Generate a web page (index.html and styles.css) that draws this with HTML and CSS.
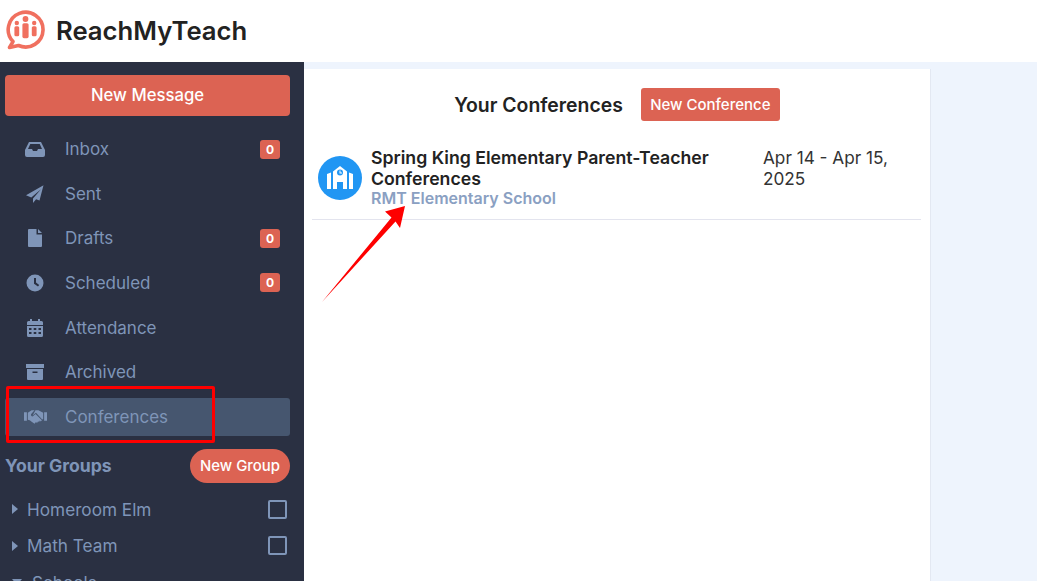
FILE: index.html
```html
<!DOCTYPE html>
<html lang="en">
<head>
<meta charset="utf-8">
<title>ReachMyTeach</title>
<link rel="stylesheet" href="styles.css">
</head>
<body>
<div class="app">
  <header class="topbar">
    <svg class="logo" viewBox="0 0 40 40" aria-hidden="true">
      <path class="logo-ring" d="M3.500 37.500 L7 31.600 A17.400 17.400 0 1 1 12.500 35.500 Z"/>
      <circle class="logo-fill" cx="19.500" cy="9" r="2.900"/>
      <circle class="logo-fill" cx="10.800" cy="13" r="2.200"/>
      <circle class="logo-fill" cx="28.200" cy="13" r="2.200"/>
      <rect class="logo-fill" x="16.400" y="13.200" width="6.200" height="15" rx="1.600"/>
      <rect class="logo-fill" x="8.400" y="16.200" width="4.800" height="10" rx="1.500"/>
      <rect class="logo-fill" x="25.800" y="16.200" width="4.800" height="10" rx="1.500"/>
    </svg>
    <span class="brand">ReachMyTeach</span>
  </header>
  <div class="body">
    <aside class="sidebar">
      <button class="new-message">New Message</button>
      <nav class="nav">
        <a class="nav-item"><span class="nav-icon"><svg viewBox="0 0 20 16" width="20" height="16"><path d="M4 1h12l4 8v5a2 2 0 0 1-2 2H2a2 2 0 0 1-2-2V9zm1.300 2L3 8H7l1 2h4l1-2h4l-2.300-5z" fill-rule="evenodd"/></svg></span><span class="nav-label">Inbox</span><span class="badge">0</span></a>
        <a class="nav-item"><span class="nav-icon"><svg viewBox="0 0 18 18" width="18" height="18"><path d="M17.500.2 0 10.300l5.300 2.200L15 4.200 7 13.400V18l3.100-3.800 3.400 1.400z"/></svg></span><span class="nav-label">Sent</span></a>
        <a class="nav-item"><span class="nav-icon"><svg viewBox="0 0 14 18" width="14" height="18"><path d="M0 1a1 1 0 0 1 1-1h7.500v5.500H14V17a1 1 0 0 1-1 1H1a1 1 0 0 1-1-1zM10 0l4 4h-4z"/></svg></span><span class="nav-label">Drafts</span><span class="badge">0</span></a>
        <a class="nav-item"><span class="nav-icon"><svg viewBox="0 0 18 18" width="18" height="18"><path fill-rule="evenodd" d="M9 .5a8.500 8.500 0 1 0 0 17 8.500 8.500 0 0 0 0-17zM8 4h2v4.600l3.200 2.300-1.200 1.600L8 9.700z"/></svg></span><span class="nav-label">Scheduled</span><span class="badge">0</span></a>
        <a class="nav-item"><span class="nav-icon"><svg viewBox="0 0 16 18" width="16" height="18"><path fill-rule="evenodd" d="M3 0h2v2h6V0h2v2h1.500A1.500 1.500 0 0 1 16 3.500V6H0V3.500A1.500 1.500 0 0 1 1.500 2H3zM0 7h16v9.500a1.500 1.500 0 0 1-1.500 1.500h-13A1.500 1.500 0 0 1 0 16.500zm2 2v2h2.500V9zm4.700 0v2h2.600V9zm4.800 0v2H14V9zM2 13v2h2.500v-2zm4.700 0v2h2.600v-2zm4.800 0v2H14v-2z"/></svg></span><span class="nav-label">Attendance</span></a>
        <a class="nav-item"><span class="nav-icon"><svg viewBox="0 0 18 16" width="18" height="16"><path fill-rule="evenodd" d="M0 0h18v4H0zM1 5h16v10a1 1 0 0 1-1 1H2a1 1 0 0 1-1-1zm5.500 2.500v1.500h5V7.500z"/></svg></span><span class="nav-label">Archived</span></a>
        <a class="nav-item active"><span class="nav-icon"><svg viewBox="0 0 24 15" width="23" height="15"><path d="M0 3h3v9H0zM21 3h3v9h-3zM4 3.500 8 1h3L7.500 5a1.500 1.500 0 0 0 2.200 2l2.300-2 6.700 6.300-1.200 1.400-1-.9-.6 1.300-1.300-.3-.8 1.200-1.600-.4L11 15l-3-2-2-1.500-2-.5zM12 1h3l5 2.500V10l-1 .5L12.500 3.500 9 6.500z"/></svg></span><span class="nav-label">Conferences</span></a>
      </nav>
      <div class="groups-head">
        <span class="groups-title">Your Groups</span>
        <button class="new-group">New Group</button>
      </div>
      <ul class="tree">
        <li class="tree-row"><span class="caret"></span><span class="tree-label">Homeroom Elm</span><span class="check"></span></li>
        <li class="tree-row"><span class="caret"></span><span class="tree-label">Math Team</span><span class="check"></span></li>
        <li class="tree-row"><span class="caret-down"></span><span class="tree-label">Schools</span></li>
      </ul>
    </aside>
    <main class="main">
      <section class="panel">
        <div class="panel-head">
          <h1 class="panel-title">Your Conferences</h1>
          <button class="new-conf">New Conference</button>
        </div>
        <div class="conf-row">
          <svg class="school" viewBox="0 0 44 44" aria-hidden="true">
            <circle cx="22" cy="22" r="22" fill="#2196f3"/>
            <path fill="#fff" fill-rule="evenodd" d="M22 10l7 5.500V33h-4v-7h-6v7h-4V15.500zm0 3.500a3 3 0 1 0 0 6 3 3 0 0 0 0-6z"/>
            <path fill="#fff" d="M9 18l4-1.500V33H9zM35 18l-4-1.500V33h4z"/>
            <path fill="#fff" d="M21.500 14.500h1v2h1.500v1h-2.500z"/>
          </svg>
          <div class="conf-info">
            <div class="conf-name">Spring King Elementary Parent-Teacher Conferences</div>
            <div class="conf-school">RMT Elementary School</div>
          </div>
          <div class="conf-date">Apr 14 - Apr 15, 2025</div>
        </div>
      </section>
    </main>
  </div>
  <div class="callout-box"></div>
  <svg class="callout-arrow" viewBox="0 0 100 110" aria-hidden="true"><path fill="#fe0000" d="M0 105 L69.500 20.500 L63 14.500 L83 9 L78 31 L73.500 24.500 Z"/></svg>
</div>
</body>
</html>
```
FILE: styles.css
```css
* { box-sizing: border-box; }
html, body { margin: 0; padding: 0; height: 100%; overflow: hidden; }
body { font-family: Inter, "Liberation Sans", sans-serif; color: #222; background: #eef4fd; }
button { font-family: inherit; border: 0; color: #fff; background: #dc6353; }
.app { position: relative; width: 1037px; height: 581px; overflow: hidden; display: flex; flex-direction: column; }

.topbar { flex: none; height: 62px; background: #fff; display: flex; align-items: center; padding: 0 0 2px 6px; gap: 10px; }
.logo { width: 40px; height: 40px; flex: none; }
.logo-ring { fill: none; stroke: #f0705f; stroke-width: 3.600px; stroke-linejoin: round; }
.logo-fill { fill: #f0705f; }
.brand { font-size: 25.700px; font-weight: 600; color: #222; }

.body { flex: 1; display: flex; min-height: 0; }
.sidebar { flex: none; width: 304px; background: #2a3042; padding: 13px 14px 0 5px; overflow: hidden; }
.new-message { display: block; width: 100%; height: 41px; border-radius: 4px; font-size: 16.700px; font-weight: 500; padding: 0 0 2px; }
.nav { display: flex; flex-direction: column; gap: 6.670px; margin-top: 14px; }
.nav-item { height: 38px; display: flex; align-items: center; border-radius: 3px; padding: 0 10px 0 18px; color: #7f95b8; font-size: 17px; }
.nav-item.active { background: #46566f; }
.nav-icon { width: 24px; display: flex; justify-content: center; margin-right: 18px; flex: none; }
.nav-icon svg { fill: #7f95b8; display: block; }
.nav-label { flex: 1; }
.badge { width: 20px; height: 19px; border-radius: 3px; background: #dc6353; color: #fff; font-size: 12px; font-weight: 700; display: flex; align-items: center; justify-content: center; }

.groups-head { display: flex; align-items: center; justify-content: space-between; margin-top: 13px; }
.groups-title { color: #7f95b8; font-size: 17.600px; font-weight: 700; }
.new-group { width: 100px; height: 34px; border-radius: 17px; font-size: 14.900px; font-weight: 500; padding: 0; }

.tree { list-style: none; margin: 8px 0 0; padding: 0 3px 0 7px; display: flex; flex-direction: column; }
.tree-row { height: 36.500px; display: flex; align-items: center; color: #7f95b8; font-size: 17.200px; }
.caret { width: 0; height: 0; border-left: 6px solid #7f95b8; border-top: 5px solid transparent; border-bottom: 5px solid transparent; margin-right: 9px; flex: none; }
.caret-down { width: 0; height: 0; border-top: 6px solid #7f95b8; border-left: 5px solid transparent; border-right: 5px solid transparent; margin-right: 10px; flex: none; }
.tree-label { flex: 1; }
.check { width: 19px; height: 19px; border: 2px solid #7f95b8; border-radius: 2px; flex: none; }

.main { flex: 1; padding-top: 7px; min-width: 0; }
.panel { width: 627px; height: 100%; background: #fff; border-right: 1px solid #e3e8f2; padding: 19px 9px 0 8px; }
.panel-head { display: flex; align-items: center; justify-content: center; gap: 18px; height: 33px; padding-left: 1px; }
.panel-title { margin: 0; font-size: 19.400px; font-weight: 600; color: #222; }
.new-conf { height: 33px; width: 139px; border-radius: 3px; font-size: 15px; font-weight: 500; padding: 0; }
.conf-row { display: flex; align-items: center; margin-top: 15px; padding: 8px 0 8px 6px; height: 84px; border-bottom: 1px solid #e3e4ee; }
.school { width: 44px; height: 44px; flex: none; margin-right: 9px; }
.conf-info { width: 392px; flex: none; }
.conf-name { font-size: 17.700px; font-weight: 600; line-height: 21px; color: #222; }
.conf-school { font-size: 16px; font-weight: 600; line-height: 19px; color: #8aa0c2; }
.conf-date { flex: 1; font-size: 17.200px; line-height: 21px; color: #333; align-self: flex-start; margin-top: 3px; }

.callout-box { position: absolute; left: 6px; top: 386px; width: 209px; height: 57px; border: 3.500px solid #fe0000; border-radius: 2px; }
.callout-arrow { position: absolute; left: 322px; top: 197px; width: 100px; height: 110px; }
```
